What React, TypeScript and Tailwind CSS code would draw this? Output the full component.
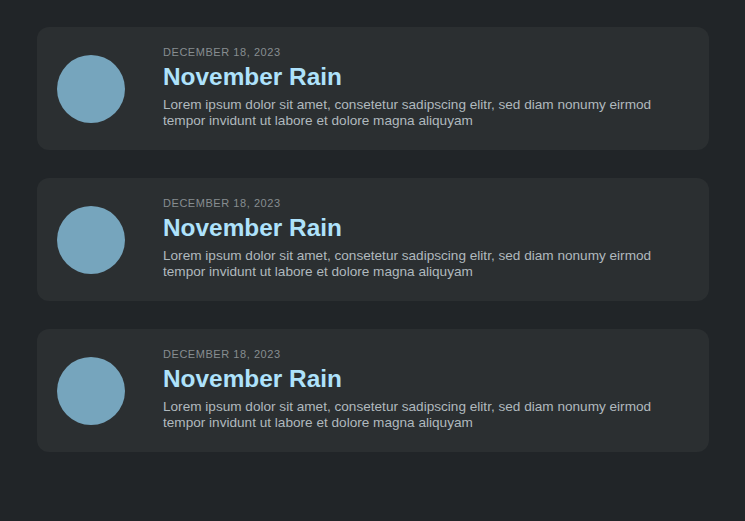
export default function App() {
  const items = [0, 1, 2];
  return (
    <div className="min-h-[521px] w-full bg-[#212528] pl-[37px] pr-[36px] pt-[27px]" style={{ fontFamily: '"Liberation Sans", Arial, sans-serif' }}>
      <div className="flex flex-col gap-[28px]">
        {items.map((i) => (
          <div key={i} className="flex h-[123px] items-start rounded-[12px] bg-[#2b2f31] pl-[20px] pr-5">
            <div className="mt-[28px] h-[68px] w-[68px] shrink-0 rounded-full bg-[#76a5bd]" />
            <div className="ml-[38px] mt-[18px] flex flex-col">
              <div className="text-[11px] uppercase leading-[14px] tracking-[0.05em] text-[#878d90]">December 18, 2023</div>
              <div className="mt-[3px] text-[24.4px] font-bold leading-[30px] text-[#aee2fb]">November Rain</div>
              <p className="mt-[5px] text-[13.6px] leading-[16px] text-[#b0b9be]">
                Lorem ipsum dolor sit amet, consetetur sadipscing elitr, sed diam nonumy eirmod
                <br />
                tempor invidunt ut labore et dolore magna aliquyam
              </p>
            </div>
          </div>
        ))}
      </div>
    </div>
  );
}
